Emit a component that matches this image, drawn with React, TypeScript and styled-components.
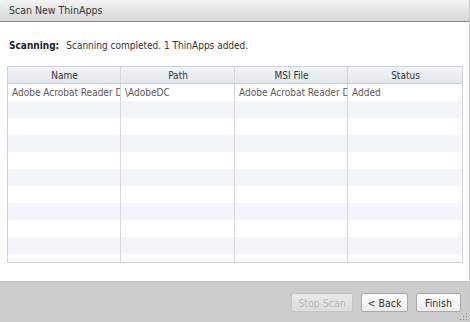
import * as React from 'react';
import styled, { createGlobalStyle } from 'styled-components';

const GlobalStyle = createGlobalStyle`
  html, body {
    margin: 0;
    padding: 0;
    background: #ffffff;
  }
  body {
    font-family: "DejaVu Sans Condensed", "DejaVu Sans", Verdana, sans-serif;
    font-size: 10px;
    color: #333333;
  }
`

const StyledDialog = styled.div`
  width: 470px;
  height: 322px;
  display: flex;
  flex-direction: column;
  background: #ffffff;
  box-sizing: border-box;
  border-right: 1px solid #c8c8c8;
  overflow: hidden;
`

const TitleBar = styled.div`
  height: 22px;
  flex: none;
  box-sizing: border-box;
  display: flex;
  align-items: center;
  padding: 0 9px 1px;
  background: linear-gradient(#f4f4f4, #d6d6d6);
  border-bottom: 1px solid #8a8a8a;
  border-top-left-radius: 3px;
  color: #333333;
  font-size: 10.5px;
`

const Body = styled.div`
  flex: 1;
  display: flex;
  flex-direction: column;
  padding: 16px 7px 0 7px;
`

const StatusLine = styled.div`
  display: flex;
  gap: 7px;
  padding-left: 2px;
  height: 14px;
  align-items: center;
  margin-bottom: 14px;

  b {
    font-weight: bold;
    color: #222222;
  }
`

const Grid = styled.div`
  width: 456px;
  height: 197px;
  box-sizing: border-box;
  border: 1px solid #cfd3d8;
  overflow: hidden;
`

const Row = styled.div<{ $stripe?: boolean; $header?: boolean }>`
  display: grid;
  grid-template-columns: 113px 114px 113px 1fr;
  height: 17px;
  box-sizing: border-box;
  background: ${p =>
    p.$header ? 'linear-gradient(#f1f4f7, #e3e9ef)' : p.$stripe ? '#f2f5f9' : '#ffffff'};
  border-bottom: ${p => (p.$header ? '1px solid #c4cad1' : 'none')};
`

const Cell = styled.div<{ $header?: boolean }>`
  border-right: 1px solid #d6d9dd;
  padding: 0 3px 0 4px;
  display: flex;
  align-items: center;
  justify-content: ${p => (p.$header ? 'center' : 'flex-start')};
  white-space: nowrap;
  overflow: hidden;
  color: ${p => (p.$header ? '#333333' : '#5a5a5a')};

  &:last-child {
    border-right: none;
  }
`

const Footer = styled.div`
  height: 41px;
  flex: none;
  box-sizing: border-box;
  background: #cccccc;
  border-top: 1px solid #c2c2c2;
  display: flex;
  justify-content: flex-end;
  align-items: flex-start;
  gap: 8px;
  padding: 11px 8px 0 0;
  position: relative;
`

const Button = styled.button<{ $w: number }>`
  width: ${p => p.$w}px;
  height: 19px;
  box-sizing: border-box;
  padding: 0;
  font-family: "DejaVu Sans Condensed", "DejaVu Sans", Verdana, sans-serif;
  font-size: 10.5px;
  color: #333333;
  background: linear-gradient(#ffffff, #ececec);
  border: 1px solid #a9a9a9;
  border-radius: 2px;

  &:disabled {
    color: #b8b8b8;
    background: linear-gradient(#e8e8e8, #dddddd);
    border-color: #c4c4c4;
  }
`

const Grip = styled.svg`
  position: absolute;
  right: 1px;
  bottom: 1px;
`

const columns = ['Name', 'Path', 'MSI File', 'Status']
const rows = [['Adobe Acrobat Reader DC', '\\AdobeDC', 'Adobe Acrobat Reader DC', 'Added']]

const App: React.FunctionComponent = () => {
  const filler = Array.from({ length: 11 }, (_, i) => rows[i] || ['', '', '', ''])

  return (
    <StyledDialog>
      <GlobalStyle />
      <TitleBar>Scan New ThinApps</TitleBar>
      <Body>
        <StatusLine>
          <b>Scanning:</b>
          <span>Scanning completed. 1 ThinApps added.</span>
        </StatusLine>
        <Grid>
          <Row $header>
            {columns.map(c => (
              <Cell $header key={c}>{c}</Cell>
            ))}
          </Row>
          {filler.map((r, i) => (
            <Row key={i} $stripe={i % 2 === 1}>
              {r.map((v, j) => (
                <Cell key={j}>{v}</Cell>
              ))}
            </Row>
          ))}
        </Grid>
      </Body>
      <Footer>
        <Button $w={62} disabled>Stop Scan</Button>
        <Button $w={47}>&lt; Back</Button>
        <Button $w={45}>Finish</Button>
        <Grip width="8" height="8" viewBox="0 0 8 8">
          <g fill="#8a8a8a">
            <rect x="6" y="0" width="1" height="1" />
            <rect x="3" y="3" width="1" height="1" />
            <rect x="6" y="3" width="1" height="1" />
            <rect x="0" y="6" width="1" height="1" />
            <rect x="3" y="6" width="1" height="1" />
            <rect x="6" y="6" width="1" height="1" />
          </g>
        </Grip>
      </Footer>
    </StyledDialog>
  );
};

export default App;
